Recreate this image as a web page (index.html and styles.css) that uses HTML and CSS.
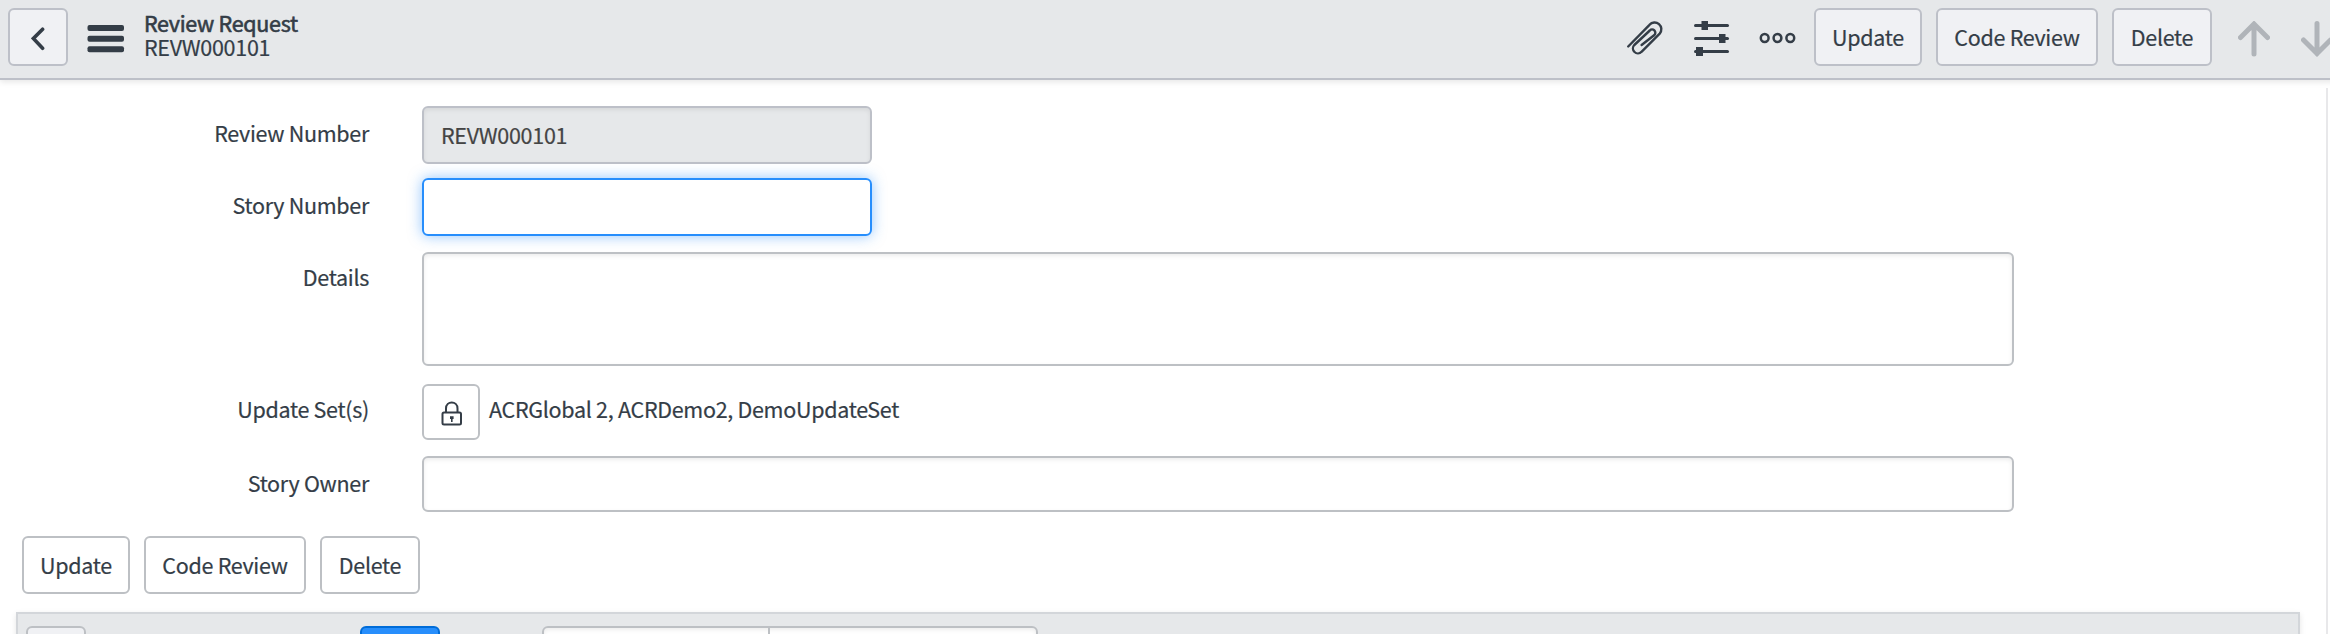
FILE: index.html
```html
<!DOCTYPE html>
<html lang="en">
<head>
<meta charset="utf-8">
<title>Review Request</title>
<link rel="stylesheet" href="styles.css">
</head>
<body>
<header class="navbar">
  <button class="btn back" aria-label="Back"><svg width="14" height="24" viewBox="0 0 14 24" fill="none" stroke="currentColor" stroke-width="3.6" stroke-linecap="round"><path d="M11.6 2.2 2.4 11.5l9.2 9.8"/></svg></button>
  <svg class="menu" width="38" height="28" viewBox="0 0 38 28" fill="currentColor"><rect x=".5" width="36.5" height="6" rx="2"/><rect x=".5" y="10.8" width="36.5" height="6" rx="2"/><rect x=".5" y="21.2" width="36.5" height="6" rx="2"/></svg>
  <div class="title"><div class="name">Review Request</div><div>REVW000101</div></div>
  <div class="tools">
    <svg class="clip" width="38" height="36" viewBox="0 0 38 36" fill="none" stroke="currentColor" stroke-width="2.4" stroke-linecap="round" stroke-linejoin="round"><path d="M2.2 26.5 23.5 4.8a6.7 6.7 0 0 1 10.2 8.8L15.5 31.8a4.9 4.9 0 0 1-7.2-6.8L23.8 10.5a3.2 3.2 0 0 1 4.6 4.5L15.6 25"/></svg>
    <svg class="sliders" width="36" height="38" viewBox="0 0 36 38" fill="currentColor"><rect y="4" width="35" height="3" rx="1.5"/><rect x="7.5" y="1" width="6.5" height="9"/><rect y="17" width="35" height="3" rx="1.5"/><rect x="25" y="14" width="6.5" height="9"/><rect y="30" width="35" height="3" rx="1.5"/><rect x="2" y="27" width="7" height="9"/></svg>
    <svg class="more" width="38" height="12" viewBox="0 0 38 12" fill="none" stroke="currentColor" stroke-width="2.5"><circle cx="5.7" cy="6" r="3.9"/><circle cx="18.5" cy="6" r="3.9"/><circle cx="31.3" cy="6" r="3.9"/></svg>
    <button class="btn w-update">Update</button>
    <button class="btn w-review">Code Review</button>
    <button class="btn w-delete">Delete</button>
    <svg class="arrow up" width="32" height="36" viewBox="0 0 32 36"><path d="M16 33V3M2.5 16.5 16 3l13.5 13.5"/></svg>
    <svg class="arrow" width="32" height="36" viewBox="0 0 32 36"><path d="M16 2.5v30M2.5 19 16 32.5 29.5 19"/></svg>
  </div>
</header>
<main class="content">
  <form class="form">
    <div class="row r-number"><label>Review Number</label><div class="field short readonly">REVW000101</div></div>
    <div class="row r-story"><label>Story Number</label><div class="field short focus"></div></div>
    <div class="row r-details"><label>Details</label><div class="field long tall"></div></div>
    <div class="row r-sets"><label>Update Set(s)</label><div class="btn lock"><svg width="22" height="26" viewBox="0 0 22 26" fill="none" stroke="currentColor" stroke-width="2"><rect x="1.5" y="11.5" width="18.5" height="12" rx="1.5"/><path d="M5 11.5V7.5C5-.5 16.500-.5 16.500 7.500v4"/><path d="M9 15.300h3.600v2.600h-1v3H10v-3H9z" fill="currentColor" stroke="none"/></svg></div><span class="sets">ACRGlobal 2, ACRDemo2, DemoUpdateSet</span></div>
    <div class="row r-owner"><label>Story Owner</label><div class="field long"></div></div>
  </form>
  <div class="actions">
    <button class="btn w-update">Update</button>
    <button class="btn w-review">Code Review</button>
    <button class="btn w-delete">Delete</button>
  </div>
  <section class="list">
    <div class="chip"></div>
    <div class="chip primary"></div>
    <div class="search"><div class="select"></div><div class="query"></div></div>
  </section>
</main>
</body>
</html>
```
FILE: styles.css
```css
* { box-sizing: border-box; }
body {
  margin: 0;
  height: 634px;
  overflow: hidden;
  display: flex;
  flex-direction: column;
  background: #fff;
  color: #343d47;
  font: 400 21.5px/24px "Noto Sans CJK SC", "Noto Sans", sans-serif;
  letter-spacing: -.3px;
  -webkit-text-stroke: .2px currentColor;
}
svg { display: block; flex: none; }
.navbar {
  position: relative;
  flex: none;
  width: 2340px;
  height: 80px;
  display: flex;
  align-items: flex-start;
  padding: 8px 0 0 8px;
  background: #e6e8ea;
  border-bottom: 2px solid #bdc0c8;
  box-shadow: 0 2px 6px rgba(0, 0, 0, .1);
}
.btn {
  flex: none;
  display: flex;
  align-items: center;
  justify-content: center;
  height: 58px;
  padding: 0;
  border: 2px solid #bdc0c4;
  border-radius: 6px;
  background: #fff;
  color: inherit;
  font: inherit;
  letter-spacing: inherit;
}
.navbar .btn { background: #f0f1f4; border-color: #bdc0c8; }
.back { width: 60px; }
.back svg { margin-top: 3px; }
.menu { margin: 17px 0 0 19px; }
.title { margin: 3px 0 0 19px; white-space: nowrap; }
.name { -webkit-text-stroke-width: .6px; }
.tools { margin-left: auto; display: flex; align-items: flex-start; }
.clip { margin-top: 12px; margin-right: 30px; }
.sliders { margin-top: 12px; margin-right: 29px; }
.more { margin-top: 24px; margin-right: 17px; }
.tools .btn { margin-right: 14px; }
.w-update { width: 108px; }
.w-review { width: 162px; }
.w-delete { width: 100px; }
.arrow { margin: 13px 7px 0 0; fill: none; stroke: #b0b4b9; stroke-width: 5; stroke-linecap: round; }
.arrow.up { margin-left: 12px; margin-right: 31px; }
.content {
  flex: 1;
  min-height: 0;
  overflow: hidden;
  width: 2328px;
  margin-top: 8px;
  border-right: 2px solid #e8e8ea;
}
.form { display: flex; flex-direction: column; padding-top: 18px; }
.row { display: flex; align-items: flex-start; }
.row label { width: 369px; margin-right: 53px; text-align: right; padding-top: 15px; }
.field {
  height: 58px;
  padding: 15px 17px 0;
  border: 2px solid #bdc0c4;
  border-radius: 6px;
  box-shadow: inset 0 2px 4px rgba(0, 0, 0, .075);
}
.short { width: 450px; }
.long { width: 1592px; height: 56px; }
.tall { height: 114px; }
.readonly { background: #e6e8ea; border-color: #bdc0c8; color: #444; }
.focus { border-color: #278efc; box-shadow: 0 0 14px rgba(39, 142, 252, .5); }
.r-story { margin-top: 14px; }
.r-details { margin-top: 16px; }
.r-sets { margin-top: 18px; }
.lock { width: 58px; height: 56px; }
.lock svg { margin-top: 4px; margin-left: 2px; }
.sets { margin-left: 9px; padding-top: 13px; white-space: nowrap; }
.row.r-details label, .row.r-sets label { padding-top: 13px; }
.r-owner { margin-top: 16px; }
.actions { display: flex; gap: 14px; margin: 24px 0 0 22px; }
.list {
  display: flex;
  align-items: flex-start;
  width: 2284px;
  height: 30px;
  margin: 18px 0 0 16px;
  padding: 12px 8px 0;
  background: #e6e8ea;
  border: 2px solid #d3d6da;
  border-bottom: 0;
  box-shadow: 0 2px 6px rgba(0, 0, 0, .1);
}
.chip { width: 60px; height: 58px; border: 2px solid #bdc0c4; border-radius: 6px; background: #f0f1f4; }
.primary { width: 80px; margin-left: 274px; background: #278efc; border-color: #006cd8; }
.search { display: flex; width: 496px; height: 58px; margin-left: 102px; border: 2px solid #bdc0c4; border-radius: 6px; background: #fff; box-shadow: inset 0 2px 4px rgba(0, 0, 0, .075); }
.select { width: 226px; border-right: 2px solid #bdc0c4; }
```
